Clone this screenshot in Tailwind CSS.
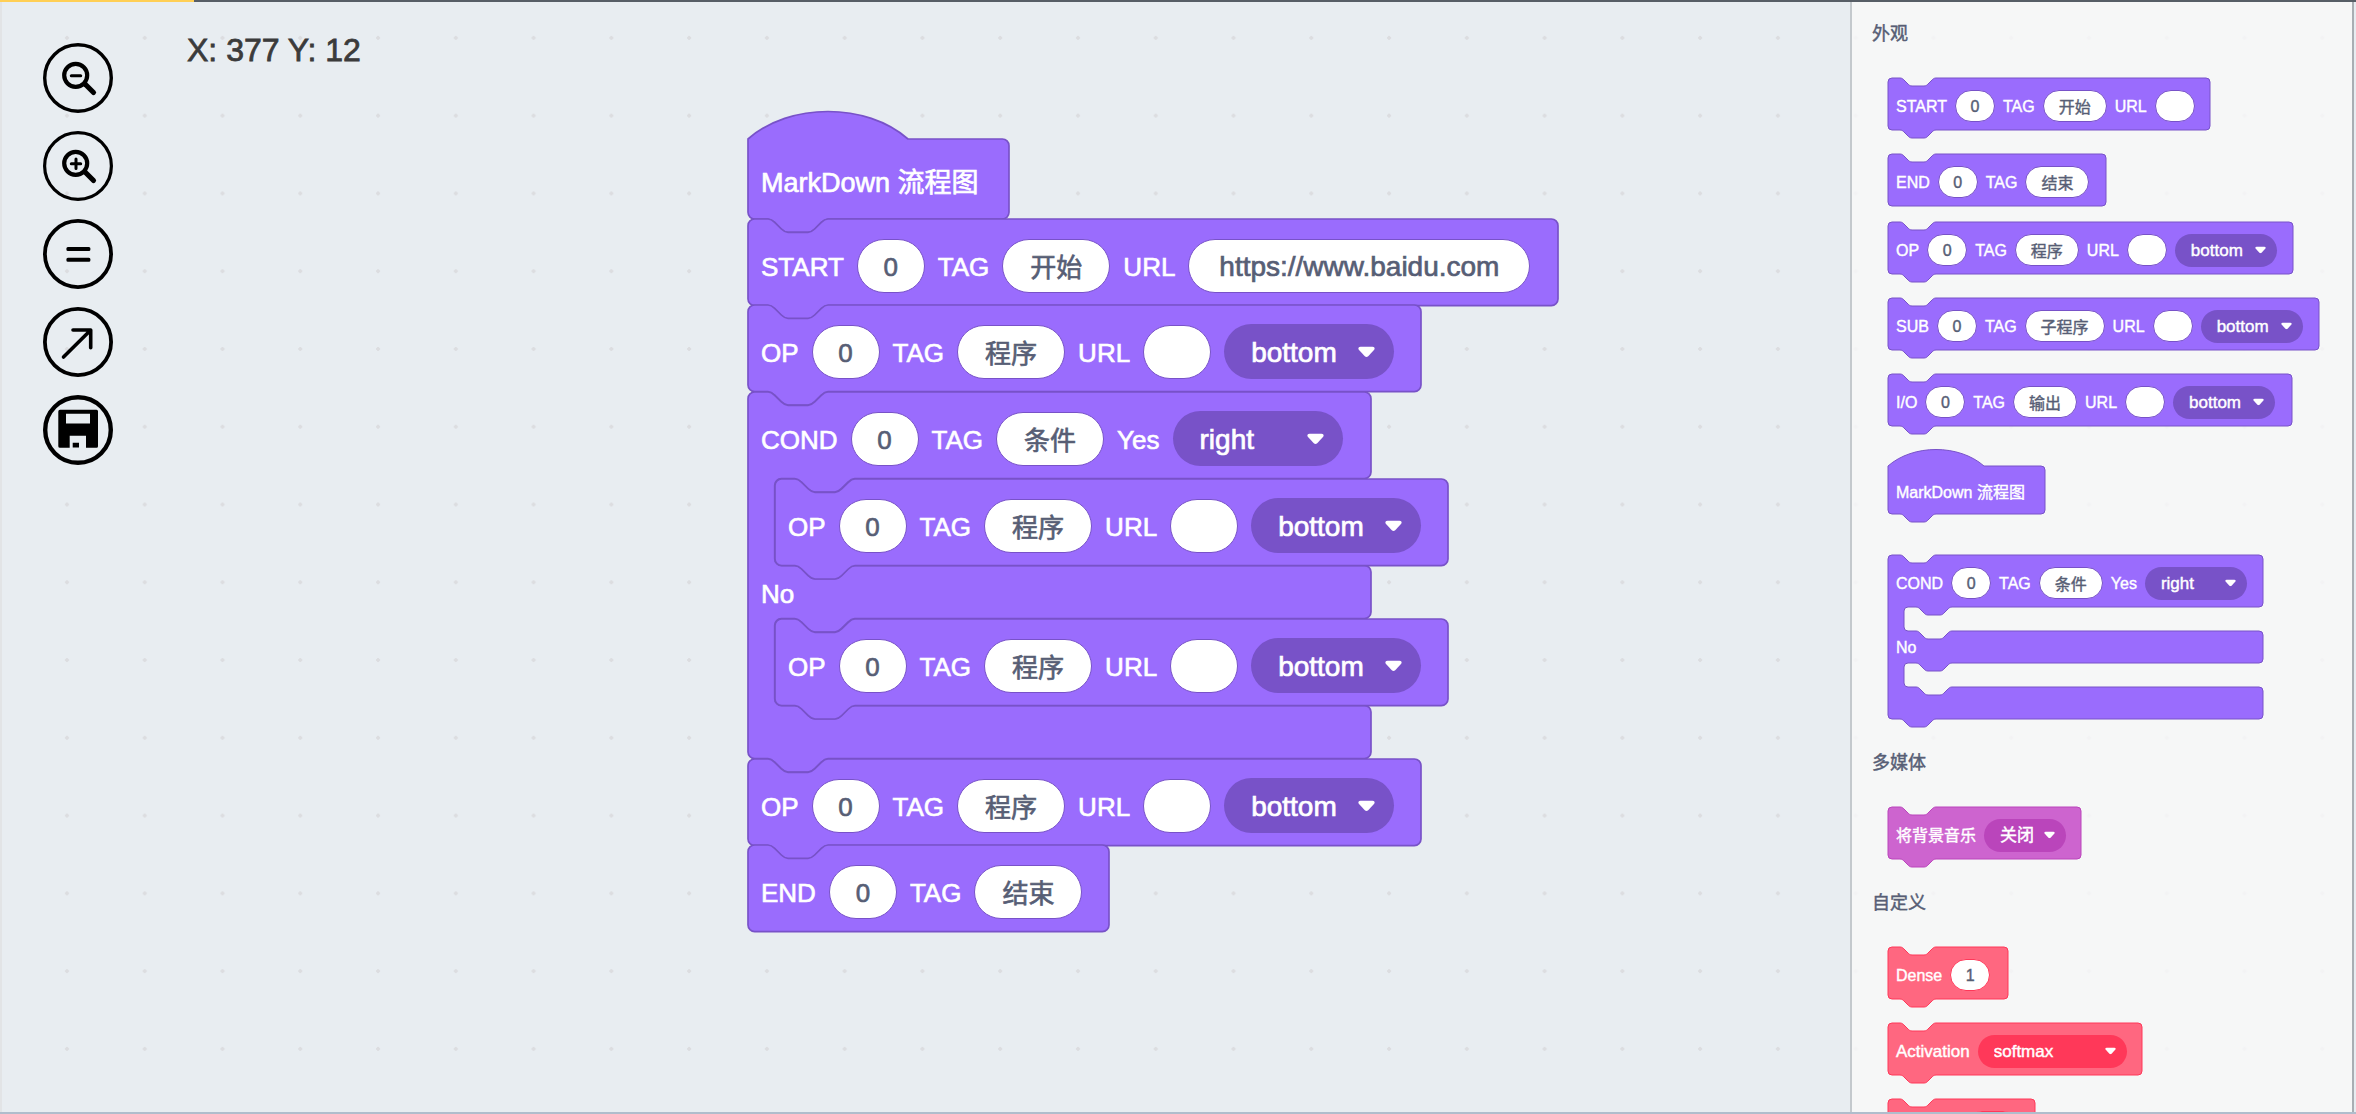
<!DOCTYPE html>
<html lang="zh">
<head>
<meta charset="utf-8">
<title>MarkDown 流程图</title>
<script src="https://cdn.jsdelivr.net/npm/@tailwindcss/browser@4"></script>
</head>
<body class="flex h-screen flex-col overflow-hidden bg-[#e8edf1] font-['Liberation_Sans','Noto_Sans_CJK_SC',sans-serif] [&_*]:[-webkit-text-stroke:0.025em]">
  <div class="flex h-[2px] shrink-0 bg-[#575e66]"><div class="w-[194px] bg-[#ffcf55]"></div></div>

  <div class="relative flex min-h-0 flex-1 border-b-2 border-b-[#b0bdcc]">
    <svg class="absolute inset-0 size-full" aria-hidden="true">
      <defs>
        <pattern id="dots" x="28" y="-3" width="77.77" height="77.77" patternUnits="userSpaceOnUse">
          <path d="M37 39h4M39 37v4" stroke="#dcdde0" stroke-width="2"/>
        </pattern>
      </defs>
      <rect width="100%" height="100%" fill="url(#dots)"/>
    </svg>

    <main class="relative flex min-w-0 flex-1 items-start border-l-2 border-l-[#e2e4e6]">
      <nav class="ml-[41px] mt-[41px] flex flex-col gap-[18px]">
        <button type="button" aria-label="缩小" class="size-[70px]">
          <svg viewBox="0 0 70 70" fill="none" stroke="#000" stroke-linecap="round"><circle cx="35" cy="35" r="33.3" stroke-width="3.4"/><circle cx="32.7" cy="32.3" r="11.5" stroke-width="4.2"/><path d="M28.3 32.8h9.4" stroke-width="3"/><path d="M42.5 41.5l8 8" stroke-width="5.2"/></svg>
        </button>
        <button type="button" aria-label="放大" class="size-[70px]">
          <svg viewBox="0 0 70 70" fill="none" stroke="#000" stroke-linecap="round"><circle cx="35" cy="35" r="33.4" stroke-width="3.2"/><circle cx="32.7" cy="32.3" r="11.5" stroke-width="4.2"/><path d="M28.3 32.8h9.4M33 28v9.4" stroke-width="3"/><path d="M42.5 41.5l8 8" stroke-width="5.2"/></svg>
        </button>
        <button type="button" aria-label="重置" class="size-[70px]">
          <svg viewBox="0 0 70 70" fill="none" stroke="#000"><circle cx="35" cy="35" r="33.1" stroke-width="3.8"/><rect x="24.4" y="28.9" width="22" height="2" rx=".5" stroke-width="2"/><rect x="24.4" y="39.7" width="22" height="2" rx=".5" stroke-width="2"/></svg>
        </button>
        <button type="button" aria-label="导出" class="size-[70px]">
          <svg viewBox="0 0 70 70" fill="none" stroke="#000" stroke-linecap="round" stroke-linejoin="round"><circle cx="35" cy="35" r="33.1" stroke-width="3.8"/><path d="M20.5 50L47.5 23.3M30 23H47.7V40.7" stroke-width="3.6"/></svg>
        </button>
        <button type="button" aria-label="保存" class="size-[70px]">
          <svg viewBox="0 0 70 70"><circle cx="35" cy="35" r="32.8" fill="none" stroke="#000" stroke-width="4.4"/><path fill-rule="evenodd" d="M17 14.7H53.5Q55 14.7 55 16.2V51.2Q55 52.7 53.5 52.7H43V40.7H26.7V52.7H17Q15.3 52.7 15.3 51.2V16.4Q15.3 14.7 17 14.7ZM23 18.7V28.4H47V18.7ZM29.7 47.7H36V52.5H29.7Z"/></svg>
        </button>
      </nav>
      <p class="ml-[74px] mt-7 text-[32px] leading-10 text-[#3b3b3b]">X: 377 Y: 12</p>
      <div id="canvas"></div>
    </main>

    <aside id="flyout" class="relative mr-[2px] w-[504px] shrink-0 overflow-hidden border-x-2 border-l-[#c4c9cd] border-r-[#a9aeb3] bg-[#f9f9f9]/80 pl-5 pt-[18px]"></aside>
  </div>

<script>
const NOTCH = 'c2 0 3 1 4 2l4 4c1 1 2 2 4 2h12c2 0 3-1 4-2l4-4c1-1 2-2 4-2';
const NOTCH_BACK = 'c-2 0-3 1-4 2l-4 4c-1 1-2 2-4 2h-12c-2 0-3-1-4-2l-4-4c-1-1-2-2-4-2';

const COLORS = {
  purple: { fill: '#9a6cfd', stroke: '#7852c8', border: 'border-[#7852c8]', drop: 'bg-[#7852c8]' },
  pink:   { fill: '#cd64cf', stroke: '#ba45bb', border: 'border-[#ba45bb]', drop: 'bg-[#ba45bb]' },
  red:    { fill: '#ff6780', stroke: '#ff3859', border: 'border-[#ff3859]', drop: 'bg-[#ff3859]' },
};

// Classes for the workspace (lg) and for the palette (sm)
const SIZES = {
  lg: {
    scale: 5 / 3,
    row: 'flex h-[87px] items-center gap-[13px] pl-[13px] pt-[6px]',
    hat: 'flex h-20 items-center pl-[13px] pt-[9px] text-[27px]',
    mid: 'flex h-[53px] items-center pl-[13px]',
    label: 'pt-1 text-[26px]', word: 'text-[28px]',
    input: 'h-[54px] pt-[3px] text-[26px]', inputText: 'h-[54px] pt-[3px] text-[28px]', inputCjk: 'h-[54px] text-[26px]',
    select: 'h-[55px] pl-[27px] pt-[3px] text-[28px]', arrow: 'right-[19px] h-[11px] w-[17px]',
  },
  sm: {
    scale: 1,
    row: 'flex h-[52px] items-center gap-2 pl-2 pt-1',
    hat: 'flex h-12 items-center pl-2 pt-[6px] text-[16px]',
    mid: 'flex h-8 items-center pl-2',
    label: 'pt-[2px] text-[16px]', word: 'pt-[2px] text-[17px]',
    input: 'h-8 pt-[2px] text-[16px]', inputText: 'h-8 pt-[2px] text-[16px]', inputCjk: 'h-8 text-[16px]',
    select: 'h-[33px] pl-4 pt-[2px] text-[17px]', arrow: 'right-[11px] h-[7px] w-[11px]',
  },
};

// Outline in block units. gap: height of each mouth of a C-shaped block.
function outline(w, kind, gap) {
  const right = w - 4;
  const tail = kind === 'end' ? '' : 'H48' + NOTCH_BACK;
  const head = kind === 'hat' ? `M0 0c25-22 71-22 96 0H${right}` : `M0 4a4 4 0 0 1 4-4h8${NOTCH}H${right}`;
  const corner = 'a4 4 0 0 1 4 4';
  const down = 'a4 4 0 0 1-4 4';
  if (kind !== 'cond') return `${head}${corner}v${kind === 'hat' ? 40 : 44}${down}${tail}H4a4 4 0 0 1-4-4z`;
  const mouth = `H64${NOTCH_BACK}h-8a4 4 0 0 0-4 4v${gap - 8}a4 4 0 0 0 4 4h8${NOTCH}H${right}${corner}v24${down}`;
  return `${head}${corner}v44${down}${mouth}${mouth}${tail}H4a4 4 0 0 1-4-4z`;
}

let uid = 0;
function parts(items, z, c) {
  return items.map(it => {
    if (it.blank) return `<span style="width:${it.blank}px"></span>`;
    if (it.label !== undefined) {
      return `<label for="f${uid + 1}" class="${it.word ? z.word : z.label} whitespace-nowrap text-white">${it.label}</label>`;
    }
    const id = 'f' + (++uid);
    if (it.drop) {
      return `<span class="relative flex">
        <select id="${id}" aria-label="${it.drop}" class="${z.select} ${c.drop} appearance-none rounded-full text-white outline-none" style="width:${it.w}px"><option>${it.drop}</option></select>
        <svg class="${z.arrow} pointer-events-none absolute top-1/2 -translate-y-1/2" viewBox="0 0 17 11" aria-hidden="true"><path fill="#fff" d="M2.5 0H14.5Q17.6.7 16.2 3.2L10.2 9.8Q8.5 11.2 6.8 9.8L.8 3.2Q-.6.7 2.5 0Z"/></svg>
      </span>`;
    }
    const face = it.long ? z.inputText : /[^\x00-\x7f]/.test(it.value) ? z.inputCjk : z.input;
    return `<input id="${id}" type="text" value="${it.value}" class="${face} ${c.border} rounded-full border bg-white text-center text-[#575e75] outline-none" style="width:${it.w}px">`;
  }).join('');
}

function block(b, size) {
  const z = SIZES[size], c = COLORS[b.color || 'purple'], s = z.scale;
  const gap = size === 'lg' ? 52 : 24;
  const isHat = b.kind === 'hat';
  let body = isHat
    ? `<div class="${z.hat} relative whitespace-nowrap text-white">${b.text}</div>`
    : `<div class="${z.row} relative">${parts(b.items, z, c)}</div>`;
  if (b.kind === 'cond') {
    body += `<div style="height:${Math.round(gap * s)}px"></div>
      <div class="${z.mid} relative"><span class="${z.label} text-white">No</span></div>
      <div style="height:${Math.round((gap + 32) * s)}px"></div>`;
  }
  return `<svg class="absolute left-0 ${isHat && size === 'sm' ? 'top-4' : 'top-0'} size-px overflow-visible" aria-hidden="true"><path transform="scale(${s})" d="${outline(b.w / s, b.kind, gap)}" fill="${c.fill}" stroke="${c.stroke}"/></svg>${body}`;
}

const L = (label, word) => ({ label, word });
const F = (value, w, long) => ({ value, w, long });
const D = (drop, w) => ({ drop, w });

const op = () => [L('OP'), F('0', 68), L('TAG'), F('程序', 108), L('URL'), F('', 68), D('bottom', 170)];
const workspace = [
  { x: 746, y: 137, w: 261, kind: 'hat', text: 'MarkDown 流程图' },
  { x: 746, y: 217, w: 810, items: [L('START'), F('0', 68), L('TAG'), F('开始', 108), L('URL'), F('https://www.baidu.com', 342, true)] },
  { x: 746, y: 303, w: 673, items: op() },
  { x: 746, y: 390, w: 623, kind: 'cond', items: [L('COND'), F('0', 68), L('TAG'), F('条件', 108), L('Yes'), D('right', 170)] },
  { x: 773, y: 477, w: 673, items: op() },
  { x: 773, y: 617, w: 673, items: op() },
  { x: 746, y: 757, w: 673, items: op() },
  { x: 746, y: 843, w: 361, kind: 'end', items: [L('END'), F('0', 68), L('TAG'), F('结束', 108)] },
];
document.getElementById('canvas').innerHTML = workspace.map(b =>
  `<div class="absolute" style="left:${b.x}px;top:${b.y}px;width:${b.w}px">${block(b, 'lg')}</div>`).join('');

const palette = [
  { title: '外观', blocks: [
    { w: 322, items: [L('START'), F('0', 40), L('TAG'), F('开始', 64), L('URL'), F('', 40)] },
    { w: 218, kind: 'end', items: [L('END'), F('0', 40), L('TAG'), F('结束', 64)] },
    { w: 405, items: [L('OP'), F('0', 40), L('TAG'), F('程序', 64), L('URL'), F('', 40), D('bottom', 102)] },
    { w: 431, items: [L('SUB'), F('0', 40), L('TAG'), F('子程序', 80), L('URL'), F('', 40), D('bottom', 102)] },
    { w: 404, items: [L('I/O'), F('0', 40), L('TAG'), F('输出', 64), L('URL'), F('', 40), D('bottom', 102)] },
    { w: 157, kind: 'hat', text: 'MarkDown 流程图' },
    { w: 375, kind: 'cond', items: [L('COND'), F('0', 40), L('TAG'), F('条件', 64), L('Yes'), D('right', 102)] },
  ] },
  { title: '多媒体', blocks: [
    { w: 193, color: 'pink', items: [L('将背景音乐'), D('关闭', 82)] },
  ] },
  { title: '自定义', blocks: [
    { w: 120, color: 'red', items: [L('Dense'), F('1', 40)] },
    { w: 254, color: 'red', items: [L('Activation', true), D('softmax', 149)] },
    { w: 147, color: 'red', items: [{ blank: 62 }, F('', 53)] },
  ] },
];
const spacing = b => b.kind === 'end' ? 'mb-4' : b.kind === 'hat' ? 'mb-[41px] pt-4' : 'mb-6';
document.getElementById('flyout').innerHTML = palette.map(g =>
  `<section>
    <h2 class="mb-[30px] h-7 text-[18px] leading-7 text-[#575e75]">${g.title}</h2>
    <div class="ml-4 flex flex-col pb-[6px]">${g.blocks.map(b => `<div class="relative ${spacing(b)}" style="width:${b.w}px">${block(b, 'sm')}</div>`).join('')}</div>
  </section>`).join('');
</script>
</body>
</html>
